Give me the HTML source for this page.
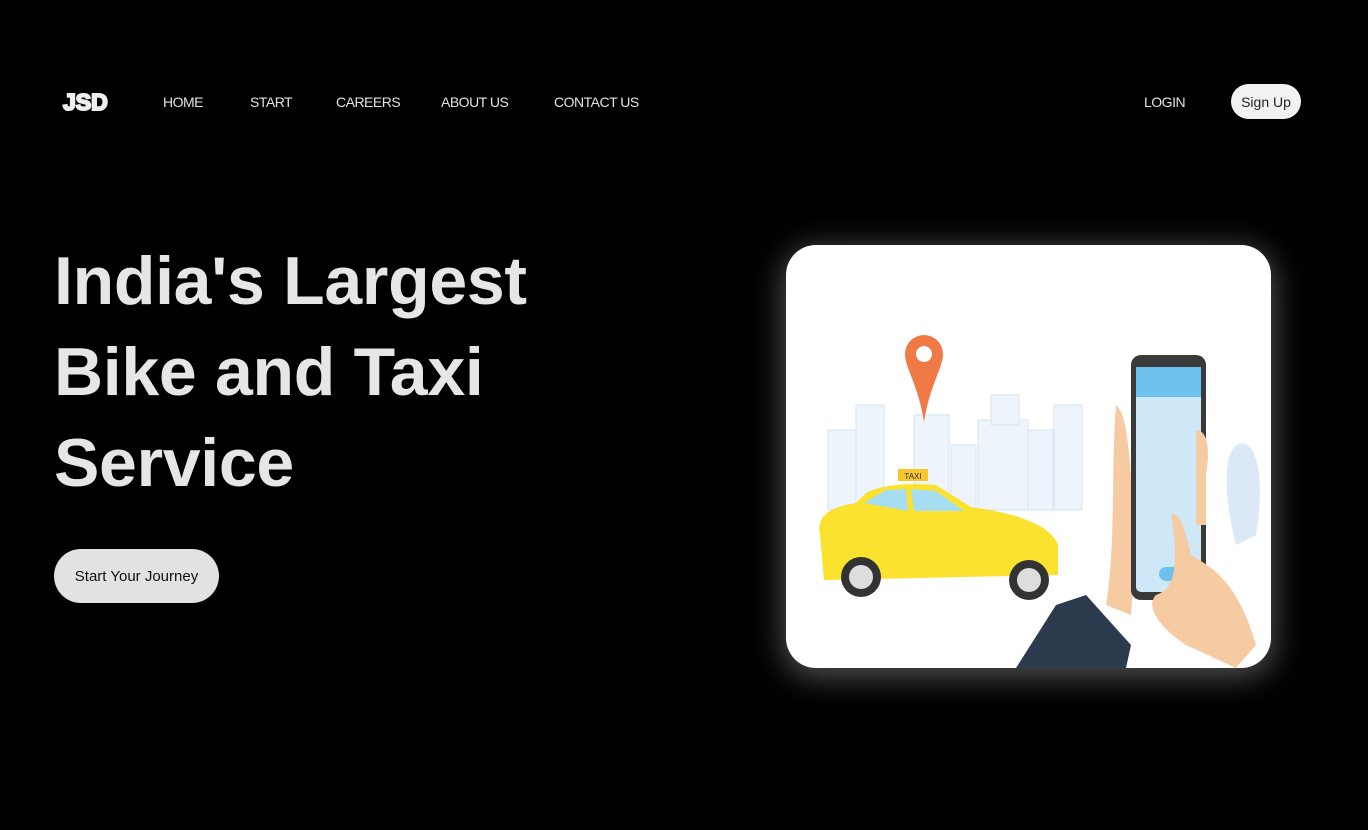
<!DOCTYPE html>
<html><head><meta charset="utf-8"><style>
*{margin:0;padding:0;box-sizing:border-box}
body{width:1368px;height:830px;background:#000;font-family:"Liberation Sans",sans-serif;position:relative;overflow:hidden;color:#ddd}
.nav{position:absolute;top:94px;font-size:14px;color:#e2e2e2;letter-spacing:-0.5px}
.logo{position:absolute;left:63px;top:89px;font-size:23px;font-weight:900;color:#eee;font-family:"Liberation Sans",sans-serif;letter-spacing:0px;-webkit-text-stroke:2px #eee}
.signup{position:absolute;left:1231px;top:84px;width:70px;height:35px;border-radius:18px;background:#f2f2f2;color:#222;font-size:14px;text-align:center;line-height:36px}
h1{position:absolute;left:54px;top:236px;font-size:68px;line-height:91px;font-weight:bold;color:#e6e6e6;letter-spacing:-0.3px}
.btn{position:absolute;left:54px;top:549px;width:165px;height:54px;border-radius:27px;background:#e2e2e2;color:#111;font-size:15px;text-align:center;line-height:56px}
.card{position:absolute;left:786px;top:245px;width:485px;height:423px;border-radius:30px;background:#fff;box-shadow:0 6px 30px 4px rgba(255,255,255,0.3);overflow:hidden}
</style></head><body>
<div class="logo">JSD</div>
<div class="nav" style="left:163px">HOME</div>
<div class="nav" style="left:250px">START</div>
<div class="nav" style="left:336px">CAREERS</div>
<div class="nav" style="left:441px">ABOUT US</div>
<div class="nav" style="left:554px">CONTACT US</div>
<div class="nav" style="left:1144px">LOGIN</div>
<div class="signup">Sign Up</div>
<h1>India's Largest<br>Bike and Taxi<br>Service</h1>
<div class="btn">Start Your Journey</div>
<div class="card">
<svg width="485" height="423" viewBox="0 0 485 423">
<g fill="#eef4fb" stroke="#d6e4f3" stroke-width="1">
<rect x="42" y="185" width="30" height="80"/><rect x="70" y="160" width="28" height="105"/>
<rect x="128" y="170" width="35" height="95"/><rect x="165" y="200" width="25" height="65"/>
<rect x="192" y="175" width="50" height="90"/><rect x="205" y="150" width="28" height="30"/>
<rect x="242" y="185" width="25" height="80"/><rect x="268" y="160" width="28" height="105"/>
</g>
<path d="M138 90 a19 19 0 0 1 19 19 c0 14 -13 30 -19 68 c-6 -38 -19 -54 -19 -68 a19 19 0 0 1 19 -19z" fill="#f07a45"/>
<circle cx="138" cy="109" r="8" fill="#fff"/>
<rect x="112" y="224" width="30" height="12" fill="#f6c72b"/>
<text x="127" y="234" font-size="8" text-anchor="middle" fill="#333" font-family="Liberation Sans">TAXI</text>
<path d="M34 290 C30 270 45 262 70 258 L80 248 C100 238 130 238 150 240 L185 262 C230 268 265 280 272 300 L272 330 L38 335 Z" fill="#fbe22e"/>
<path d="M78 258 L100 245 L120 244 L122 266 Z M125 244 L150 246 L178 266 L128 266Z" fill="#a7ddf0"/>
<circle cx="75" cy="332" r="20" fill="#333"/><circle cx="75" cy="332" r="12" fill="#ddd"/>
<circle cx="243" cy="335" r="20" fill="#333"/><circle cx="243" cy="335" r="12" fill="#ddd"/>
<path d="M230 423 L270 360 L300 350 L345 400 L340 423Z" fill="#2b3a4c"/>
<path d="M330 160 C345 170 345 250 350 300 L345 370 L320 360 C330 300 325 220 330 160Z" fill="#f6cba2"/>
<rect x="345" y="110" width="75" height="245" rx="10" fill="#3a3a3a"/>
<rect x="350" y="122" width="65" height="225" rx="5" fill="#cfe8f7"/>
<rect x="350" y="122" width="65" height="30" fill="#6ec1ec"/>
<rect x="373" y="322" width="45" height="14" rx="7" fill="#6ec1ec"/>
<path d="M410 185 C420 185 425 200 420 230 L420 280 L410 280Z" fill="#f6cba2"/>
<path d="M385 270 C395 265 400 290 405 310 C420 320 450 330 470 400 L450 423 L400 400 C370 380 360 360 370 350 C385 345 395 330 385 270Z" fill="#f6cba2"/>
<path d="M450 200 C470 190 480 230 470 290 L450 300 C440 260 435 215 450 200Z" fill="#dbe9f7"/>
</svg>
</div>
</body></html>
